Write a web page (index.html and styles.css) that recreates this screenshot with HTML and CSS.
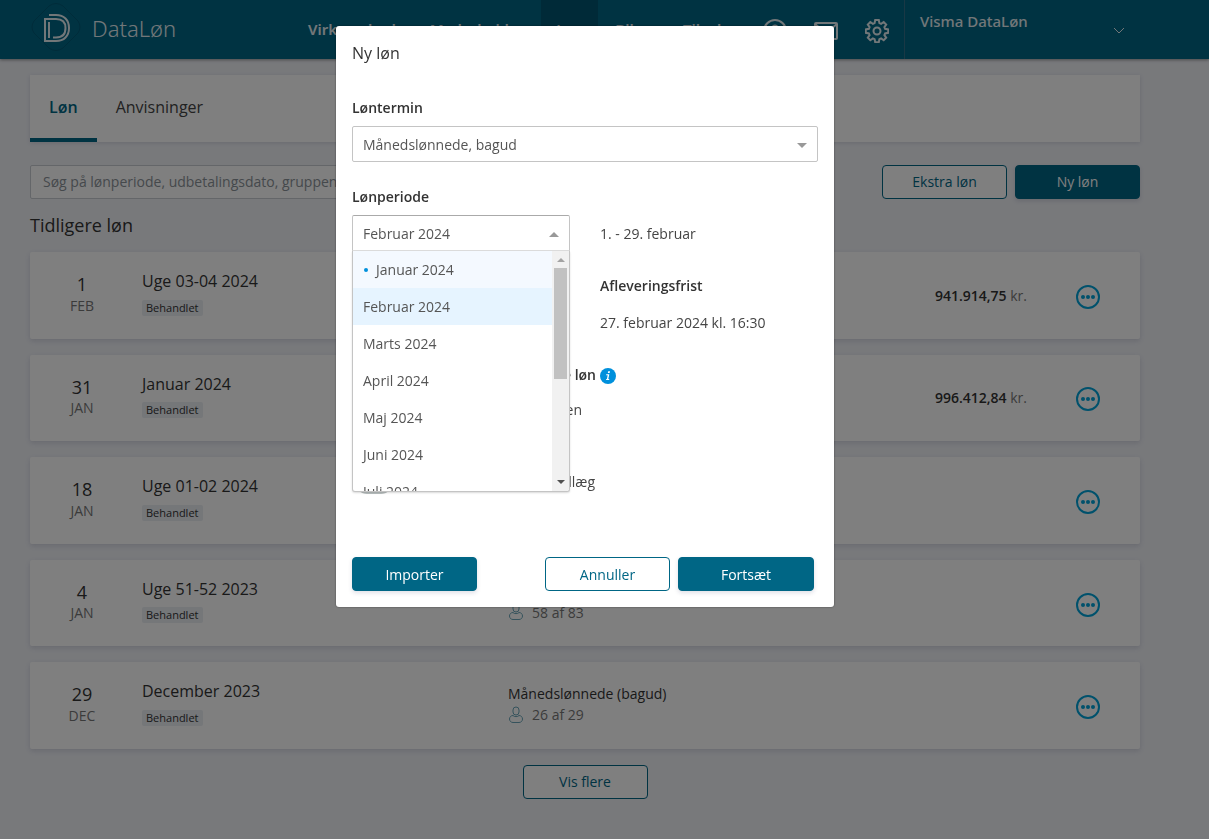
FILE: index.html
```html
<!DOCTYPE html>
<html lang="da">
<head>
<meta charset="utf-8">
<meta name="viewport" content="width=device-width, initial-scale=1">
<title>DataLøn</title>
<link rel="stylesheet" href="styles.css">
</head>
<body>
<header class="topbar">
  <a class="brand" href="#">
    <svg class="brand-mark" viewBox="0 0 52 52" width="52" height="52" aria-hidden="true">
      <path class="brand-diamond" d="M19 4Q26 -1 33 4L48 19Q52 25 48 31L33 46Q26 51 19 46L4 31Q0 25 4 19Z"/>
      <path d="M19 13H26C34 13 39 18 39 26S34 39 26 39H15V17H26C32 17 35.500 20 35.500 26S32 35.500 26 35.500H23"/>
      <path d="M19 20V36"/>
    </svg>
    <span>DataLøn</span>
  </a>
  <nav class="nav">
    <a href="#">Virksomhed</a>
    <a href="#">Medarbejder</a>
    <a href="#" class="active">Løn</a>
    <a href="#">Biler</a>
    <a href="#">Tilvalg</a>
  </nav>
  <div class="tools">
    <button type="button" aria-label="Hjælp"><svg viewBox="0 0 24 24" width="24" height="24"><circle cx="12" cy="12" r="11"/><path d="M9 9.500a3 3 0 1 1 4.500 2.600c-1 .6-1.500 1-1.500 2.400M12 17v1.500"/></svg></button>
    <button type="button" aria-label="Beskeder"><svg viewBox="0 0 24 24" width="24" height="24"><rect x="1" y="4" width="22" height="16" rx="1"/><path d="M1 5l11 9 11-9"/></svg></button>
    <button type="button" aria-label="Indstillinger"><svg viewBox="0 0 24 24" width="24" height="24"><circle cx="12" cy="12" r="3.500"/><path d="M10.200 1h3.600l.6 3.100 1.700.7 2.600-1.800 2.500 2.500-1.800 2.600.7 1.700 3.100.6v3.400l-3.100.6-.7 1.700 1.800 2.600-2.500 2.500-2.600-1.800-1.700.7-.6 3.100h-3.600l-.6-3.100-1.700-.7-2.600 1.800-2.500-2.500 1.800-2.600-.7-1.700-3.100-.6v-3.400l3.100-.6.7-1.700-1.800-2.600 2.500-2.500 2.600 1.800 1.700-.7z"/></svg></button>
  </div>
  <button type="button" class="account">
    <span>Visma DataLøn</span>
    <svg viewBox="0 0 12 8" width="12" height="8" aria-hidden="true"><path d="M1 1l5 5 5-5"/></svg>
  </button>
</header>

<main class="page">
  <nav class="tabs">
    <a href="#" class="current">Løn</a>
    <a href="#">Anvisninger</a>
  </nav>
  <div class="actions">
    <input class="search" type="search" aria-label="Søg" placeholder="Søg på lønperiode, udbetalingsdato, gruppenavn">
    <button type="button" class="btn">Ekstra løn</button>
    <button type="button" class="btn primary">Ny løn</button>
  </div>
  <h1>Tidligere løn</h1>
  <div class="runs">
    <article class="run">
      <div class="date"><b>1</b><span>FEB</span></div>
      <div class="info"><h2>Uge 03-04 2024</h2><span class="badge">Behandlet</span></div>
      <div class="group"></div>
      <p class="amount"><b>941.914,75</b> kr.</p>
      <button type="button" class="more" aria-label="Mere"><svg viewBox="0 0 24 24" width="24" height="24"><circle class="ring" cx="12" cy="12" r="11"/><circle cx="7" cy="12" r="2"/><circle cx="12" cy="12" r="2"/><circle cx="17" cy="12" r="2"/></svg></button>
    </article>
    <article class="run">
      <div class="date"><b>31</b><span>JAN</span></div>
      <div class="info"><h2>Januar 2024</h2><span class="badge">Behandlet</span></div>
      <div class="group"></div>
      <p class="amount"><b>996.412,84</b> kr.</p>
      <button type="button" class="more" aria-label="Mere"><svg viewBox="0 0 24 24" width="24" height="24"><circle class="ring" cx="12" cy="12" r="11"/><circle cx="7" cy="12" r="2"/><circle cx="12" cy="12" r="2"/><circle cx="17" cy="12" r="2"/></svg></button>
    </article>
    <article class="run">
      <div class="date"><b>18</b><span>JAN</span></div>
      <div class="info"><h2>Uge 01-02 2024</h2><span class="badge">Behandlet</span></div>
      <div class="group"></div>
      <p class="amount"></p>
      <button type="button" class="more" aria-label="Mere"><svg viewBox="0 0 24 24" width="24" height="24"><circle class="ring" cx="12" cy="12" r="11"/><circle cx="7" cy="12" r="2"/><circle cx="12" cy="12" r="2"/><circle cx="17" cy="12" r="2"/></svg></button>
    </article>
    <article class="run">
      <div class="date"><b>4</b><span>JAN</span></div>
      <div class="info"><h2>Uge 51-52 2023</h2><span class="badge">Behandlet</span></div>
      <div class="group"><span>14-dages (bagud)</span><span class="people"><svg viewBox="0 0 16 18" width="16" height="18" aria-hidden="true"><rect x="5" y="1" width="6" height="8" rx="3"/><path d="M5 9.500C3 9.500 1.500 11 1.500 13S3 16.500 5 16.500h6c2 0 3.500-1.500 3.500-3.500S13 9.500 11 9.500C10 11 6 11 5 9.500z"/></svg>58 af 83</span></div>
      <p class="amount"></p>
      <button type="button" class="more" aria-label="Mere"><svg viewBox="0 0 24 24" width="24" height="24"><circle class="ring" cx="12" cy="12" r="11"/><circle cx="7" cy="12" r="2"/><circle cx="12" cy="12" r="2"/><circle cx="17" cy="12" r="2"/></svg></button>
    </article>
    <article class="run">
      <div class="date"><b>29</b><span>DEC</span></div>
      <div class="info"><h2>December 2023</h2><span class="badge">Behandlet</span></div>
      <div class="group"><span>Månedslønnede (bagud)</span><span class="people"><svg viewBox="0 0 16 18" width="16" height="18" aria-hidden="true"><rect x="5" y="1" width="6" height="8" rx="3"/><path d="M5 9.500C3 9.500 1.500 11 1.500 13S3 16.500 5 16.500h6c2 0 3.500-1.500 3.500-3.500S13 9.500 11 9.500C10 11 6 11 5 9.500z"/></svg>26 af 29</span></div>
      <p class="amount"></p>
      <button type="button" class="more" aria-label="Mere"><svg viewBox="0 0 24 24" width="24" height="24"><circle class="ring" cx="12" cy="12" r="11"/><circle cx="7" cy="12" r="2"/><circle cx="12" cy="12" r="2"/><circle cx="17" cy="12" r="2"/></svg></button>
    </article>
  </div>
  <button type="button" class="btn show-more">Vis flere</button>
</main>

<div class="overlay">
  <form class="modal" role="dialog" aria-labelledby="dialog-title">
    <h2 class="modal-title" id="dialog-title">Ny løn</h2>
    <label class="label term-label" for="term">Løntermin</label>
    <div class="select">
      <select id="term"><option>Månedslønnede, bagud</option></select>
    </div>
    <label class="label period-label" for="period">Lønperiode</label>
    <div class="period">
      <div class="select open">
        <select id="period"><option>Februar 2024</option></select>
        <div class="dropdown">
          <ul class="options" role="listbox" aria-label="Lønperiode">
            <li role="option" class="hint"><i></i>Januar 2024</li>
            <li role="option" class="chosen" aria-selected="true">Februar 2024</li>
            <li role="option">Marts 2024</li>
            <li role="option">April 2024</li>
            <li role="option">Maj 2024</li>
            <li role="option">Juni 2024</li>
            <li role="option">Juli 2024</li>
          </ul>
          <div class="scrollbar"><i class="up"></i><i class="thumb"></i><i class="down"></i></div>
        </div>
      </div>
      <div class="facts">
        <p>1. - 29. februar</p>
        <p class="label">Afleveringsfrist</p>
        <p>27. februar 2024 kl. 16:30</p>
      </div>
    </div>
    <div class="details">
      <p class="label help-row">Hent data til denne løn
        <svg viewBox="0 0 16 16" width="16" height="16" aria-hidden="true"><circle cx="8" cy="8" r="8"/><path d="M8.200 3.300h1.800l-.4 1.700H7.800zM6.300 6.300h3l-1 4.700h1l-.2 1H6l.2-1h.7l.8-3.700H6.100z"/></svg></p>
      <p class="source-row">Fra lønperioden</p>
      <label class="toggle-row"><input type="checkbox" role="switch"><span>Overfør tillæg</span></label>
    </div>
    <div class="modal-footer">
      <button type="button" class="btn primary">Importer</button>
      <span class="spacer"></span>
      <button type="button" class="btn">Annuller</button>
      <button type="submit" class="btn primary wide">Fortsæt</button>
    </div>
  </form>
</div>
</body>
</html>
```
FILE: styles.css
```css
* { box-sizing: border-box; }
body {
  margin: 0;
  min-height: 100vh;
  background: #f0f2f7;
  color: #333;
  font: 14px/20px "Open Sans", "Noto Sans", sans-serif;
}
h1, h2, p, ul { margin: 0; padding: 0; }
button, input, select { font: inherit; }
button { cursor: pointer; }
a { text-decoration: none; }
svg { flex: none; }

.topbar {
  display: flex;
  height: 59px;
  background: #006685;
  box-shadow: 0 1px 3px rgba(0, 0, 0, .4);
  color: #fff;
  font-family: "Noto Sans", sans-serif;
}
.brand {
  display: flex;
  align-items: center;
  gap: 10px;
  width: 291px;
  padding: 0 0 4px 30px;
  color: #e5eff2;
  font-size: 22px;
  font-weight: 300;
}
.brand-mark { fill: none; stroke: currentColor; stroke-width: 2; }
.brand-diamond { stroke: #005874; stroke-width: 1; }
.nav { display: flex; flex: 1; }
.nav a {
  display: flex;
  align-items: center;
  padding: 0 17px 2px;
  color: #e5eff2;
  font-size: 15px;
  font-weight: 600;
}
.nav .active { padding: 0 15px 2px; background: #005470; }
.tools { display: flex; align-items: center; gap: 27px; padding: 3px 15px 0; }
.tools button {
  display: flex;
  padding: 0;
  border: 0;
  background: none;
  color: #e5eff2;
}
.tools svg, .account svg { fill: none; stroke: currentColor; stroke-width: 2; }
.account {
  display: flex;
  align-items: center;
  justify-content: space-between;
  width: 305px;
  padding: 3px 84px 0 15px;
  border: 0;
  border-left: 1px solid #33718a;
  background: none;
  color: #e5eff2;
  font-size: 15px;
  font-weight: 500;
}
.account span { align-self: flex-start; margin-top: 8px; }
.account svg { stroke-width: 1; }

.page { padding: 16px 69px 40px 30px; }
.tabs {
  display: flex;
  height: 67px;
  background: #fff;
  box-shadow: 0 1px 4px rgba(50, 50, 93, .15);
  font-size: 16px;
}
.tabs a {
  display: flex;
  align-items: center;
  padding: 0 19px;
  border-bottom: 4px solid transparent;
  color: #444;
}
.tabs .current { border-color: #006685; color: #006685; font-weight: 600; }
.actions { display: flex; gap: 8px; margin: 23px 0 16px; }
.search {
  width: 460px;
  height: 34px;
  padding: 0 12px 1px;
  border: 1px solid #c8ccd2;
  border-radius: 2px;
  background: #fff;
  color: #333;
}
.search::placeholder { color: #8b9298; opacity: 1; }
.search + .btn { margin-left: auto; }
.btn {
  width: 125px;
  height: 34px;
  padding: 0;
  border: 1px solid #006685;
  border-radius: 4px;
  background: #fff;
  color: #006685;
}
.primary {
  background: #006685;
  box-shadow: 0 2px 4px rgba(50, 50, 93, .15);
  color: #fff;
  font-weight: 500;
}
.wide { width: 136px; }
h1 { font-size: 18px; font-weight: 500; line-height: 21px; }

.runs { display: grid; gap: 16px; margin-top: 16px; }
.run {
  display: grid;
  grid-template-columns: 104px 1fr 1fr 153px 65px;
  gap: 8px;
  padding: 17px 40px 23px 0;
  border-radius: 2px;
  background: #fff;
  box-shadow: 0 2px 5px rgba(50, 50, 93, .15);
}
.date { display: flex; flex-direction: column; align-items: center; padding-top: 5px; color: #777; }
.date b { color: #333; font-size: 18px; font-weight: 500; line-height: 1.2; }
.info { display: flex; flex-direction: column; align-items: flex-start; gap: 5px; }
.info h2 { font-size: 16px; font-weight: 500; line-height: 1.6; }
.badge {
  padding: 0 4px;
  border-radius: 2px;
  background: #eaeef2;
  font-size: 11px;
  font-weight: 500;
  line-height: 16px;
}
.group { display: flex; flex-direction: column; padding-top: 5px; }
.people { display: flex; align-items: center; gap: 8px; color: #777; line-height: 1.5; }
.people svg { fill: none; stroke: #6aa5b8; }
.amount { align-self: center; padding-top: 7px; color: #777; text-align: right; }
.amount b { color: #333; font-weight: 600; }
.more {
  display: flex;
  align-self: center;
  justify-self: end;
  padding: 9px 0 0;
  border: 0;
  background: none;
}
.more svg { fill: #00a3d9; }
.more .ring { fill: none; stroke: #00a3d9; stroke-width: 2; }
.show-more { display: block; margin: 16px auto 0; }

.overlay {
  position: fixed;
  inset: 0;
  display: flex;
  align-items: flex-start;
  justify-content: center;
  padding: 26px 39px 0 0;
  background: rgba(0, 0, 0, .5);
}
.modal {
  width: 498px;
  padding: 16px;
  border-radius: 3px;
  background: #fff;
  box-shadow: 0 0 2px rgba(0, 0, 0, .5);
  color: #444;
}
.modal-title { color: #333; font-size: 16px; font-weight: 500; line-height: 22px; }
.label { display: block; color: #333; font-weight: 600; font-size: 14px; }
.term-label { margin: 34px 0 8px; }
.period-label { margin: 25px 0 8px; }
.select { position: relative; height: 36px; }
.select select {
  width: 100%;
  height: 100%;
  padding: 2px 10px 0;
  border: 1px solid #c4c4c4;
  border-radius: 2px;
  appearance: none;
  background: #fff;
  color: #555;
}
.select::after {
  content: "";
  position: absolute;
  top: 17px;
  right: 11px;
  border: 5px solid transparent;
  border-top-color: #999;
  border-bottom: 0;
  pointer-events: none;
}
.open::after { border-top: 0; border-bottom: 5px solid #999; }
.open select { border-top-color: #aaa; border-bottom-color: #ddd; border-radius: 2px 2px 0 0; }
.period { display: grid; grid-template-columns: 218px 1fr; gap: 30px; }
.dropdown {
  position: absolute;
  z-index: 1;
  top: 100%;
  left: 0;
  display: flex;
  width: 100%;
  height: 241px;
  overflow: hidden;
  border: 1px solid #c4c4c4;
  border-top: 0;
  border-radius: 0 0 3px 3px;
  background: #fff;
  box-shadow: 0 1px 2px rgba(0, 0, 0, .15);
}
.options { flex: 1; list-style: none; color: #555; }
.options li { display: flex; align-items: center; height: 37px; padding: 0 10px; }
.options .hint { gap: 8px; background: #f4f9ff; }
.hint i { width: 4px; height: 4px; margin-left: 1px; border-radius: 2px; background: #0090dc; }
.options .chosen { background: #e6f4ff; }
.scrollbar {
  display: flex;
  flex-direction: column;
  align-items: center;
  width: 17px;
  padding: 7px 2px 7px;
  background: #f1f1f1;
}
.up, .down { border: 4px solid transparent; }
.up { border-top: 0; border-bottom-color: #a3a3a3; }
.down { margin-top: auto; border-bottom: 0; border-top-color: #505050; }
.thumb { width: 13px; height: 111px; margin-top: 6px; background: #c1c1c1; }
.facts { padding-top: 9px; }
.facts .label { margin: 32px 0 17px; }
.details { margin-top: 32px; }
.help-row { display: flex; align-items: center; justify-content: flex-end; gap: 4px; width: 264px; }
.help-row svg { margin-top: 2px; }
.help-row circle { fill: #0090dc; }
.help-row path { fill: #fff; }
.source-row { width: 230px; margin-top: 15px; text-align: right; }
.toggle-row {
  display: flex;
  align-items: flex-start;
  justify-content: space-between;
  width: 243px;
  margin-top: 52px;
  padding-left: 4px;
}
.toggle-row input {
  appearance: none;
  width: 36px;
  height: 22px;
  margin: 0;
  border-radius: 11px;
  background: #b9bfbf;
}
.modal-footer { display: flex; gap: 8px; margin: 63px 4px 0 0; }
.modal-footer .btn { padding-top: 2px; }
.spacer { flex: 1; }
```
